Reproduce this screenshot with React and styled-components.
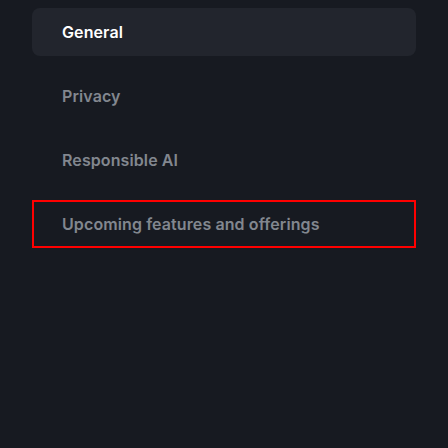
import React from 'react';
import styled, { createGlobalStyle } from 'styled-components';

const GlobalStyle = createGlobalStyle`
  html, body {
    margin: 0;
    padding: 0;
    background: #171a21;
    width: 448px;
    height: 448px;
    overflow: hidden;
  }
`;

const Page = styled.div`
  width: 448px;
  height: 448px;
  box-sizing: border-box;
  padding: 8px 32px;
  background: #171a21;
  font-family: Inter, 'Noto Sans', sans-serif;
`;

const Nav = styled.nav`
  display: flex;
  flex-direction: column;
  gap: 16px;
`;

const NavItem = styled.div`
  height: 48px;
  box-sizing: border-box;
  display: flex;
  align-items: center;
  padding-left: 28px;
  font-size: 16px;
  font-weight: 600;
  letter-spacing: 0.1px;
  color: ${props => (props.active ? '#ffffff' : '#82878f')};
  background: ${props => (props.active ? '#22252d' : 'transparent')};
  border: ${props => (props.focused ? '2px solid #ff0000' : '2px solid transparent')};
  border-radius: ${props => (props.focused ? '0' : '8px')};
`;

const items = [
  { label: 'General', active: true },
  { label: 'Privacy' },
  { label: 'Responsible AI' },
  { label: 'Upcoming features and offerings', focused: true },
];

export default function App() {
  return (
    <>
      <GlobalStyle />
      <Page>
        <Nav>
          {items.map(item => (
            <NavItem key={item.label} active={item.active} focused={item.focused}>
              {item.label}
            </NavItem>
          ))}
        </Nav>
      </Page>
    </>
  );
}
